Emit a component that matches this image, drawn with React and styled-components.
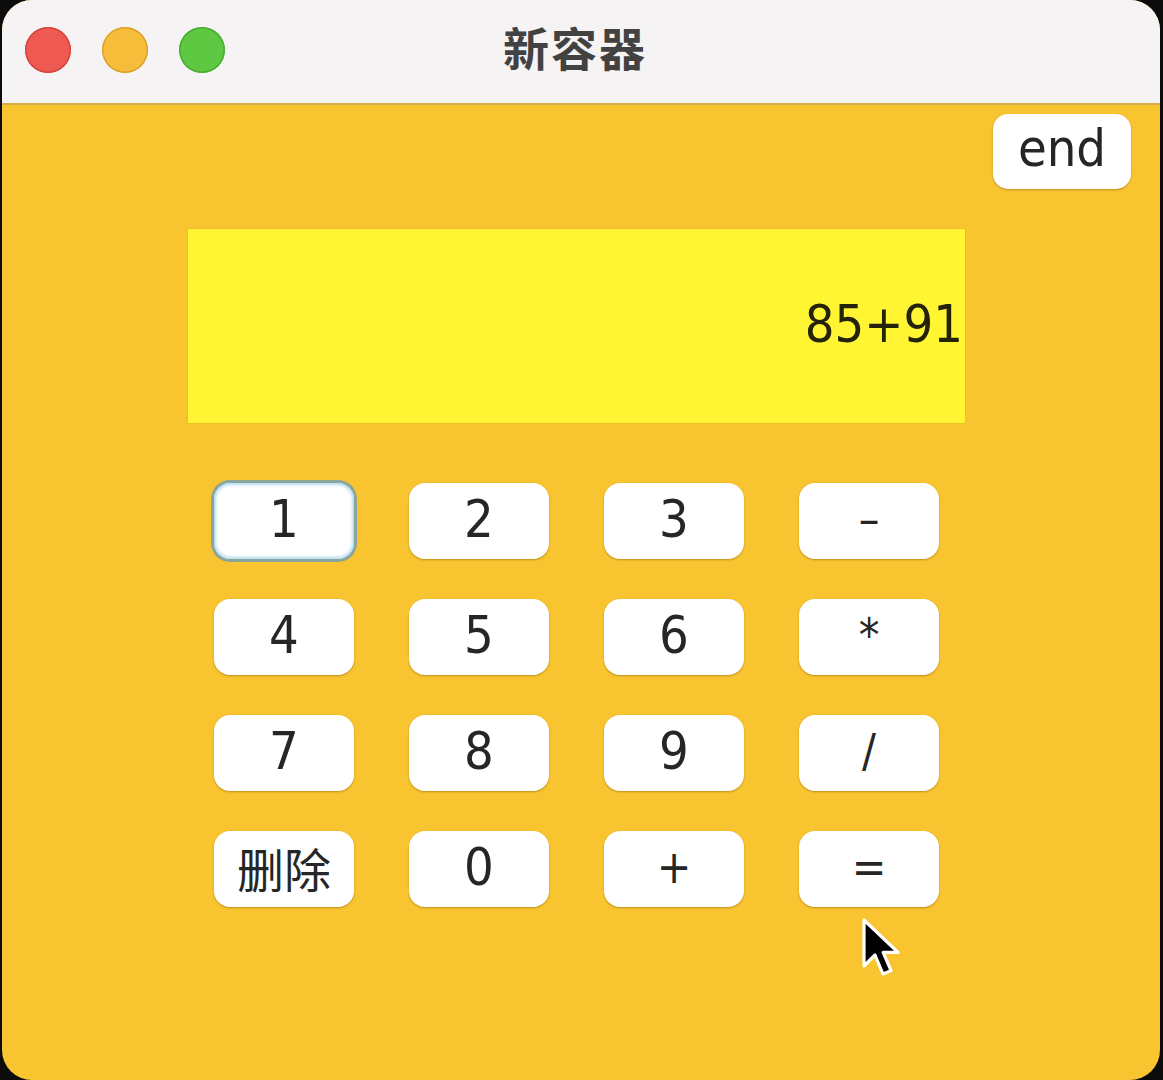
import React from "react";
import styled, { createGlobalStyle } from "styled-components";

const Global = createGlobalStyle`
  html, body {
    margin: 0;
    padding: 0;
    background: #0c0c0c;
  }
  body {
    font-family: "DejaVu Sans Condensed", "DejaVu Sans", sans-serif;
  }
`;

const Window = styled.div`
  position: relative;
  margin-left: 2px;
  width: 1158px;
  height: 1080px;
  border-radius: 30px;
  overflow: hidden;
  background: #f8c430;
  display: flex;
  flex-direction: column;
`;

const TitleBar = styled.div`
  position: relative;
  height: 103px;
  flex: none;
  background: #f6f3f4;
  border-bottom: 2px solid #d8ad4c;
  display: flex;
  align-items: center;
  justify-content: center;
`;

const Lights = styled.div`
  position: absolute;
  left: 23px;
  top: 27px;
  display: flex;
  gap: 31px;
`;

const Light = styled.span`
  width: 46px;
  height: 46px;
  border-radius: 50%;
  background: ${(p) => p.color};
  box-shadow: inset 0 0 0 1.5px ${(p) => p.edge};
`;

const Title = styled.h1`
  margin: 0 12px 12px 0;
  font-family: "Noto Sans CJK SC", sans-serif;
  font-weight: 700;
  font-size: 46px;
  color: #424242;
  letter-spacing: 2px;
`;

const Body = styled.div`
  flex: 1;
  display: flex;
  flex-direction: column;
  padding: 9px 29px 0 186px;
`;

const TopRow = styled.div`
  display: flex;
  justify-content: flex-end;
`;

const Button = styled.button`
  border: 0;
  outline: 0;
  padding: 0;
  background: #ffffff;
  border-radius: 16px;
  font-family: "DejaVu Sans Condensed", "DejaVu Sans", sans-serif;
  font-size: 52px;
  line-height: 1;
  color: #262626;
  box-shadow: 0 1px 2px rgba(120, 80, 0, 0.45);
  display: flex;
  align-items: center;
  justify-content: center;
  padding-bottom: 4px;
  box-sizing: border-box;
`;

const EndButton = styled(Button)`
  width: 138px;
  height: 75px;
  border-radius: 15px;
  padding-bottom: 8px;
`;

const Display = styled.div`
  margin-top: 40px;
  width: 777px;
  height: 194px;
  background: #fff533;
  box-shadow: 0 0 1px rgba(180, 140, 0, 0.6);
  display: flex;
  align-items: center;
  justify-content: flex-end;
  padding: 0 2px 4px 0;
  box-sizing: border-box;
  font-size: 52px;
  color: #25220a;
`;

const Keypad = styled.div`
  margin: 60px 0 0 26px;
  display: grid;
  grid-template-columns: repeat(4, 140px);
  grid-auto-rows: 76px;
  column-gap: 55px;
  row-gap: 40px;
`;

const fontFor = (kind) =>
  kind === "cjk"
    ? '"Noto Sans CJK SC", sans-serif'
    : '"DejaVu Sans Condensed", "DejaVu Sans", sans-serif';

const sizeFor = (kind) =>
  kind === "cjk" ? "47px" : kind === "op" ? "46px" : "52px";

const Key = styled(Button)`
  width: 140px;
  height: 76px;
  font-size: ${(p) => sizeFor(p.$kind)};
  font-family: ${(p) => fontFor(p.$kind)};
  ${(p) =>
    p.$focused &&
    `
    box-shadow: 0 0 0 3px rgba(120, 160, 175, 0.85), inset 0 0 3px 2px rgba(170, 215, 240, 0.9);
  `}
`;

const Cursor = styled.svg`
  position: absolute;
  left: 858px;
  top: 918px;
  width: 46px;
  height: 62px;
`;

const keys = [
  "1", "2", "3", "–",
  "4", "5", "6", "*",
  "7", "8", "9", "/",
  "删除", "0", "+", "=",
];

const kindOf = (k) =>
  k === "删除" ? "cjk" : /[0-9]/.test(k) ? "digit" : "op";

export default function App() {
  return (
    <>
      <Global />
      <Window>
        <TitleBar>
          <Lights>
            <Light color="#ee5a52" edge="#d7453f" />
            <Light color="#f6bd3b" edge="#dca22c" />
            <Light color="#5ec843" edge="#4aad33" />
          </Lights>
          <Title>新容器</Title>
        </TitleBar>
        <Body>
          <TopRow>
            <EndButton>end</EndButton>
          </TopRow>
          <Display>85+91</Display>
          <Keypad>
            {keys.map((k, i) => (
              <Key key={i} $focused={i === 0} $kind={kindOf(k)}>
                {k}
              </Key>
            ))}
          </Keypad>
        </Body>
        <Cursor viewBox="0 0 23 31">
          <path
            d="M2 1 L2 24 L7.5 18.5 L11.5 28 L15.5 26.3 L11.6 17.2 L19 17.2 Z"
            fill="#000"
            stroke="#fff"
            strokeWidth="1.6"
            strokeLinejoin="round"
          />
        </Cursor>
      </Window>
    </>
  );
}
